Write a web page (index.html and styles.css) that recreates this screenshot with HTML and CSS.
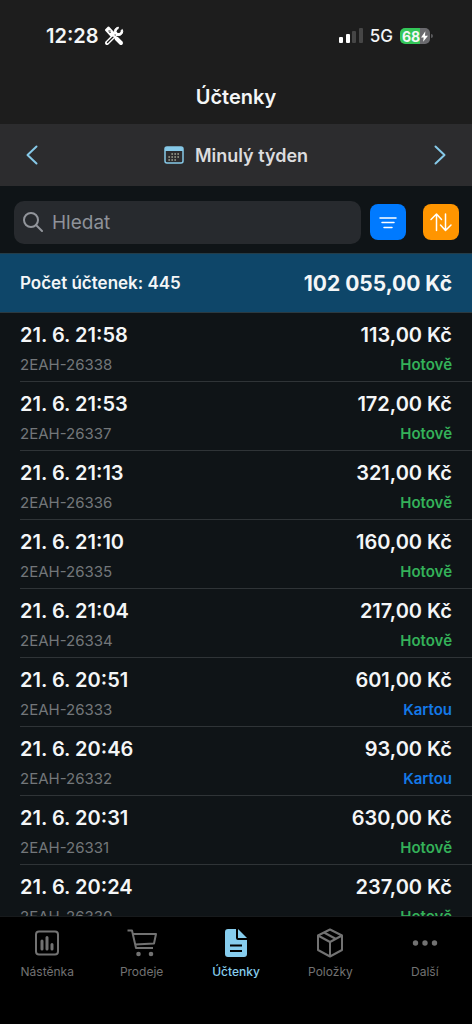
FILE: index.html
```
<!DOCTYPE html>
<html lang="cs">
<head>
<meta charset="utf-8">
<meta name="viewport" content="width=device-width, initial-scale=1">
<title>Účtenky</title>
<link rel="stylesheet" href="styles.css">
</head>
<body>
<div class="app">
  <div class="status">
    <div class="status-left">
      <span class="clock">12:28</span>
      <svg class="tools" viewBox="0 0 20 20" fill="none" stroke="#fff" aria-hidden="true">
        <path d="M3 17 14 6" stroke-width="4" stroke-linecap="round"/>
        <path d="M18.300 3.500A4.200 4.200 0 1 1 14.500 1.200L13.500 4l2 2z" fill="#fff" stroke-width="1"/>
        <circle cx="14.600" cy="5.200" r="1.900" fill="#1d1d1d" stroke="none"/>
        <path d="M3.500 16.500 11 9" stroke="#1d1d1d" stroke-width="1.400" stroke-linecap="round"/>
        <path d="M2 4 4.500 1.500 10 7.500 7.500 10z" fill="#fff" stroke-width="2" stroke-linejoin="round"/>
        <path d="M8 8 13 13" stroke-width="2"/>
        <path d="M12.500 12.500 17 17" stroke-width="4" stroke-linecap="round"/>
        <path d="M4 5h2M5 6.500h2M6 4v2" stroke="#555" stroke-width=".8"/>
      </svg>
    </div>
    <div class="status-right">
      <svg class="signal" viewBox="0 0 24 16" aria-hidden="true">
        <rect x="0" y="9" width="4" height="6" rx="1" fill="#fff"/>
        <rect x="7" y="6" width="4" height="9" rx="1" fill="#fff"/>
        <rect x="13" y="3" width="4" height="12" rx="1" fill="#464646"/>
        <rect x="20" y="0" width="4" height="15" rx="1" fill="#464646"/>
      </svg>
      <span class="network">5G</span>
      <span class="battery"><span>68</span><svg viewBox="0 0 8 12" aria-hidden="true"><path d="M5 0 0 7h3L2.500 12 8 5H4.500z" fill="#fff"/></svg></span>
    </div>
  </div>
  <header class="title"><h1>Účtenky</h1></header>
  <nav class="period" aria-label="Období">
    <button class="arrow" type="button" aria-label="Předchozí"><svg viewBox="0 0 12 20"><path d="M10.500 1.500 1.500 10l9 8.500"/></svg></button>
    <button class="range" type="button">
      <svg viewBox="0 0 20 18" aria-hidden="true">
        <rect x="1" y="1" width="18" height="16" rx="2" fill="none" stroke="#86c9e8" stroke-width="1.500"/>
        <path d="M1 5V3a2 2 0 0 1 2-2h14a2 2 0 0 1 2 2v2z" fill="#86c9e8"/>
        <path d="M7.500 8h8M4.500 11h11M4.500 14h8" stroke="#b9bfa9" stroke-width="1.300" stroke-dasharray="1.300 1.700"/>
      </svg>
      Minulý týden
    </button>
    <button class="arrow" type="button" aria-label="Následující"><svg viewBox="0 0 12 20"><path d="m1.500 1.500 9 8.500-9 8.500"/></svg></button>
  </nav>
  <div class="tools-row">
    <label class="search">
      <svg viewBox="0 0 20 20" aria-hidden="true"><circle cx="8" cy="8" r="7"/><path d="m13 13 6 6"/></svg>
      <input type="search" placeholder="Hledat" aria-label="Hledat">
    </label>
    <button class="square filter" type="button" aria-label="Filtr"><svg viewBox="0 0 36 36"><path d="M10 14h16M12 18.500h12M14 23.500h8"/></svg></button>
    <button class="square sort" type="button" aria-label="Řazení"><svg viewBox="0 0 36 36"><path d="M13.500 26.500V10.500M8 15.500l5.500-5.500L18.500 15.500M22.500 10v16M17.500 21l5 5.500L28 21"/></svg></button>
  </div>
  <div class="summary"><span class="count">Počet účtenek: 445</span><strong class="total">102 055,00 Kč</strong></div>
  <ul class="list">
    <li class="item"><span class="date">21. 6. 21:58</span><span class="amount">113,00 Kč</span><span class="code">2EAH-26338</span><span class="cash">Hotově</span></li>
    <li class="item"><span class="date">21. 6. 21:53</span><span class="amount">172,00 Kč</span><span class="code">2EAH-26337</span><span class="cash">Hotově</span></li>
    <li class="item"><span class="date">21. 6. 21:13</span><span class="amount">321,00 Kč</span><span class="code">2EAH-26336</span><span class="cash">Hotově</span></li>
    <li class="item"><span class="date">21. 6. 21:10</span><span class="amount">160,00 Kč</span><span class="code">2EAH-26335</span><span class="cash">Hotově</span></li>
    <li class="item"><span class="date">21. 6. 21:04</span><span class="amount">217,00 Kč</span><span class="code">2EAH-26334</span><span class="cash">Hotově</span></li>
    <li class="item"><span class="date">21. 6. 20:51</span><span class="amount">601,00 Kč</span><span class="code">2EAH-26333</span><span class="card">Kartou</span></li>
    <li class="item"><span class="date">21. 6. 20:46</span><span class="amount">93,00 Kč</span><span class="code">2EAH-26332</span><span class="card">Kartou</span></li>
    <li class="item"><span class="date">21. 6. 20:31</span><span class="amount">630,00 Kč</span><span class="code">2EAH-26331</span><span class="cash">Hotově</span></li>
    <li class="item"><span class="date">21. 6. 20:24</span><span class="amount">237,00 Kč</span><span class="code">2EAH-26330</span><span class="cash">Hotově</span></li>
  </ul>
  <nav class="tabs" aria-label="Hlavní">
    <a class="tab" href="#"><svg viewBox="0 0 32 32"><rect x="5" y="4.500" width="22" height="23" rx="3"/><path d="M11 14v8M16 10.500V22M21 17.500V22" stroke-width="3" stroke-linecap="round"/></svg>Nástěnka</a>
    <a class="tab" href="#"><svg viewBox="0 0 32 32"><path d="M1.500 3.500h4.500l4 17.500h17M7 7h23l-2 9.500L9 17.500"/><circle cx="12.500" cy="27" r="1.300" fill="currentColor"/><circle cx="25" cy="27" r="1.300" fill="currentColor"/></svg>Prodeje</a>
    <a class="tab active" href="#" aria-current="page"><svg viewBox="0 0 32 32"><path d="M8 2h8v9a2 2 0 0 0 2 2h9v14a3 3 0 0 1-3 3H8a3 3 0 0 1-3-3V5a3 3 0 0 1 3-3z" fill="currentColor" stroke="none"/><path d="m18 2 9 9h-9z" fill="currentColor" stroke="none"/><path d="M10 18.500h12M10 24h12" stroke="#000"/></svg>Účtenky</a>
    <a class="tab" href="#"><svg viewBox="0 0 32 32"><path d="m16 2.500 12 6v14.500l-12 6.500-12-6.500V8.500zM4 8.500l12 6.500 12-6.500M16 15v14.500M10 5.500l12 6.500"/></svg>Položky</a>
    <a class="tab" href="#"><svg viewBox="0 0 32 32"><g fill="currentColor" stroke="none"><circle cx="6.500" cy="16" r="2.700"/><circle cx="16" cy="16" r="2.700"/><circle cx="25.500" cy="16" r="2.700"/></g></svg>Další</a>
  </nav>
</div>
</body>
</html>
```
FILE: styles.css
```
* { box-sizing: border-box; }
body { margin: 0; background: #000; color: #f4f6f7; font-family: Inter, "Liberation Sans", sans-serif; }
button { border: 0; padding: 0; background: none; color: inherit; font: inherit; cursor: pointer; }
svg { display: block; }

.app { display: flex; flex-direction: column; height: 100vh; background: #0f1417; }

.status { display: flex; justify-content: space-between; align-items: center; height: 72px; padding: 0 42px 0 46px; background: #1d1d1d; flex: none; }
.status-left, .status-right { display: flex; align-items: center; gap: 5px; }
.clock { font-size: 20px; font-weight: 600; }
.tools { width: 20px; height: 20px; }
.status-right { gap: 7px; }
.signal { width: 24px; height: 16px; }
.network { font-size: 17px; font-weight: 500; }
.battery { position: relative; display: flex; align-items: center; justify-content: center; gap: 1px; width: 30px; height: 16px; border-radius: 5px; background: linear-gradient(to right, #34c759 68%, #6a6a6e 68%); font-size: 14px; font-weight: 700; }
.battery::after { content: ""; position: absolute; right: -3px; top: 6px; width: 2px; height: 4px; border-radius: 0 2px 2px 0; background: #5a5a5d; }
.battery svg { width: 7px; height: 11px; }

.title { height: 52px; background: #1d1d1d; text-align: center; flex: none; }
.title h1 { margin: 0; padding-top: 13px; font-size: 20px; line-height: 24px; font-weight: 600; }

.period { display: flex; justify-content: space-between; align-items: center; height: 62px; padding: 0 26px; background: #2c2c2e; flex: none; }
.arrow svg { width: 12px; height: 20px; fill: none; stroke: #86c9e8; stroke-width: 2; stroke-linecap: round; stroke-linejoin: round; }
.range { display: flex; align-items: center; gap: 11px; font-size: 18px; font-weight: 600; color: #dcdcde; }
.range svg { width: 20px; height: 18px; }

.tools-row { display: flex; align-items: center; height: 67px; padding: 5px 13px 0 14px; flex: none; }
.search { display: flex; align-items: center; gap: 9px; flex: 1; min-width: 0; height: 43px; padding: 0 9px; border-radius: 10px; background: #272a2e; margin-right: 9px; }
.search svg { width: 20px; height: 20px; fill: none; stroke: #92959b; stroke-width: 2; stroke-linecap: round; flex: none; }
.search input { flex: 1; min-width: 0; border: 0; padding: 0; outline: 0; background: none; color: #fff; font: 400 19px Inter, "Liberation Sans", sans-serif; }
.search input::placeholder { color: #8e9299; opacity: 1; }
.square { width: 36px; height: 36px; border-radius: 8px; }
.square svg { width: 36px; height: 36px; fill: none; stroke: #fff; stroke-width: 1.5; stroke-linecap: round; stroke-linejoin: round; }
.filter { background: #007aff; margin-right: 17px; }
.sort { background: #ff9500; }

.summary { display: flex; justify-content: space-between; align-items: center; height: 60px; padding: 0 20px; border-top: 1px solid #243d49; border-bottom: 1px solid #2b3a41; background: #0e4669; flex: none; }
.count { font-size: 17px; font-weight: 600; }
.total { font-size: 21px; font-weight: 700; }

.list { flex: 1; min-height: 0; margin: 0; padding: 0 0 0 20px; overflow: hidden; list-style: none; }
.item { display: grid; grid-template-columns: 1fr auto; align-content: start; height: 69px; padding: 10px 20px 0 0; border-bottom: 1px solid #2f3437; }
.date, .amount { font-size: 20px; line-height: 24px; font-weight: 600; }
.code, .cash, .card { padding-top: 8px; font-size: 15px; line-height: 20px; }
.amount, .cash, .card { text-align: right; }
.code { color: #73777a; }
.cash, .card { font-weight: 600; }
.cash { color: #34b159; }
.card { color: #1479e8; }

.tabs { display: flex; height: 108px; border-top: 1px solid #171a1c; background: #000; flex: none; }
.tab { display: flex; flex: 1; flex-direction: column; align-items: center; gap: 5px; padding-top: 10px; color: #727272; font-size: 12px; line-height: 16px; font-weight: 400; text-decoration: none; }
.tab svg { width: 32px; height: 32px; fill: none; stroke: currentColor; stroke-width: 2; stroke-linejoin: round; }
.tab.active { color: #86cdee; font-weight: 500; }
```
